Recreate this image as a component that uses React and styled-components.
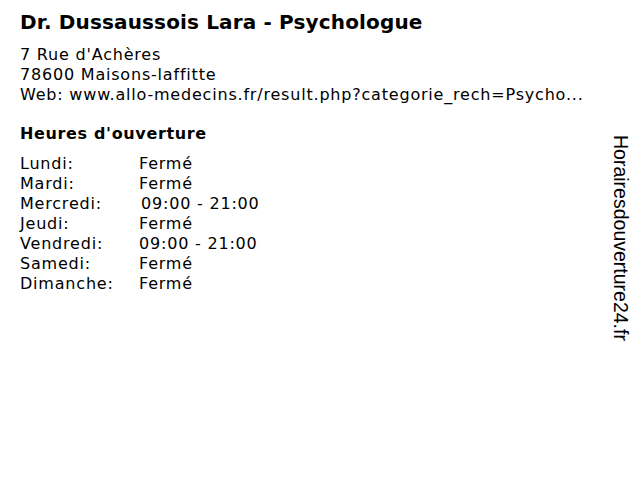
import React from 'react';
import styled, { createGlobalStyle } from 'styled-components';

const GlobalStyle = createGlobalStyle`
	html, body {
		margin: 0;
		padding: 0;
		background: #FFFFFF;
	}
	body {
		font-family: "DejaVu Sans", Verdana, sans-serif;
		color: #000000;
	}
`;

const Page = styled.div`
	width: 640px;
	height: 480px;
	display: flex;
	overflow: hidden;
`;

const Main = styled.div`
	flex: 1;
	padding: 10px 0px 0px 20px;
	min-width: 0;
`;

const Title = styled.h1`
	margin: 0;
	font-size: 20px;
	font-weight: bold;
	line-height: 24px;
	letter-spacing: 0.15px;
`;

const Address = styled.div`
	margin-top: 11px;
	font-size: 16px;
	line-height: 20px;
	letter-spacing: 0.8px;
	white-space: nowrap;
`;

const Heading = styled.h2`
	margin: 18px 0px 9px 0px;
	font-size: 16px;
	font-weight: bold;
	line-height: 22px;
	letter-spacing: 0.65px;
`;

const Hours = styled.div`
	display: grid;
	grid-template-columns: 119px auto;
	font-size: 16px;
	line-height: 20px;
	letter-spacing: 0.8px;
`;

const Value = styled.span`
	padding-left: ${props => props.shift || 0}px;
`;

const Side = styled.div`
	width: 40px;
	display: flex;
	justify-content: center;
	padding-top: 135px;
`;

const SideText = styled.span`
	writing-mode: vertical-rl;
	font-family: "Liberation Sans", Arial, sans-serif;
	font-size: 19.5px;
	height: fit-content;
	color: #000000;
`;

const days = [
	['Lundi:', 'Fermé'],
	['Mardi:', 'Fermé'],
	['Mercredi:', '09:00 - 21:00', 2],
	['Jeudi:', 'Fermé'],
	['Vendredi:', '09:00 - 21:00'],
	['Samedi:', 'Fermé'],
	['Dimanche:', 'Fermé'],
];

export default function App() {
	return (
		<Page>
			<GlobalStyle />
			<Main>
				<Title>Dr. Dussaussois Lara - Psychologue</Title>
				<Address>
					7 Rue d'Achères<br />
					78600 Maisons-laffitte<br />
					Web: www.allo-medecins.fr/result.php?categorie_rech=Psycho...
				</Address>
				<Heading>Heures d'ouverture</Heading>
				<Hours>
					{days.map(([day, value, shift]) => (
						<React.Fragment key={day}>
							<span>{day}</span>
							<Value shift={shift}>{value}</Value>
						</React.Fragment>
					))}
				</Hours>
			</Main>
			<Side>
				<SideText>Horairesdouverture24.fr</SideText>
			</Side>
		</Page>
	);
}
